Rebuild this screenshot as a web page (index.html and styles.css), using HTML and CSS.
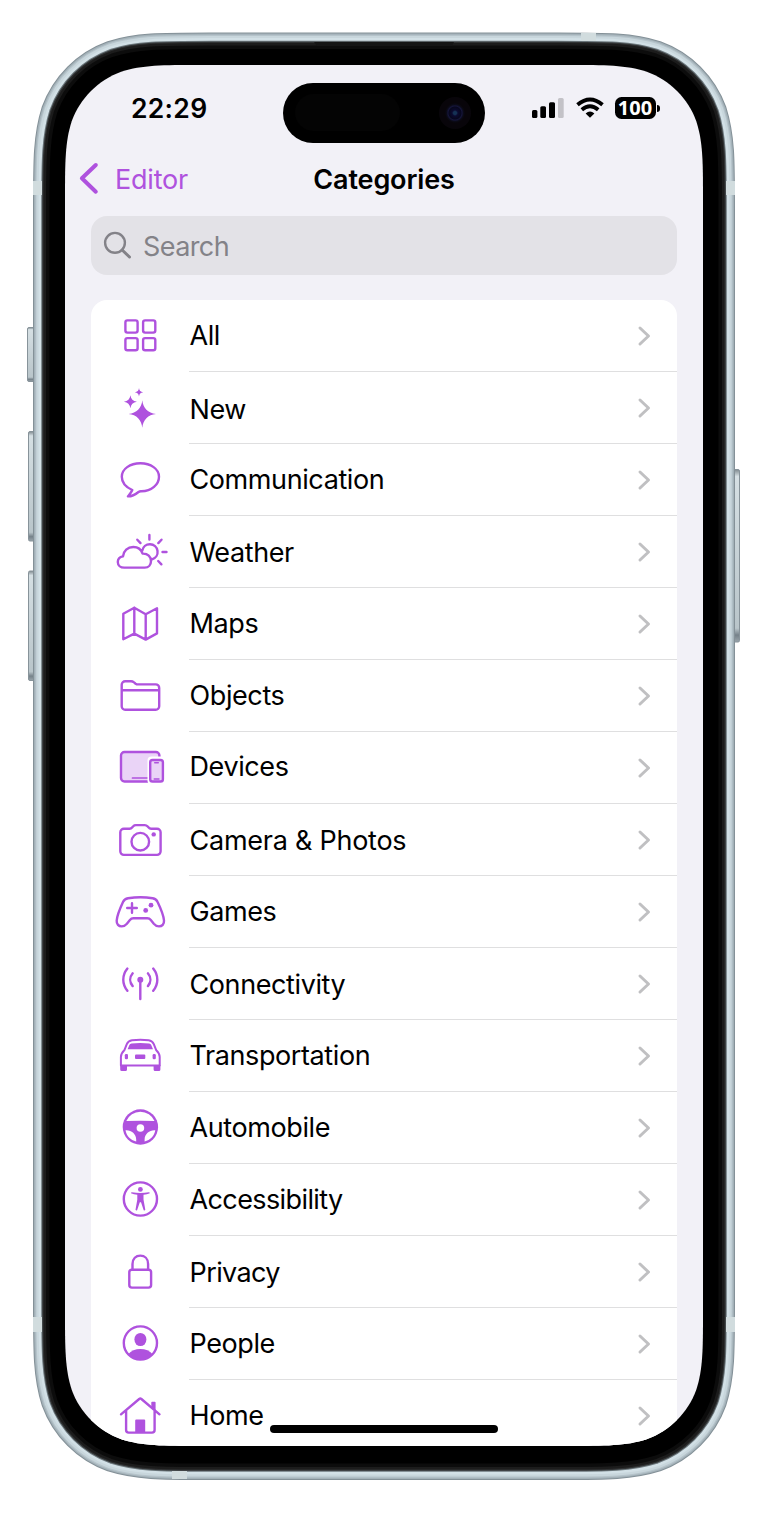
FILE: index.html
```html
<!DOCTYPE html>
<html lang="en">
<head>
<meta charset="utf-8">
<title>Categories</title>
<link rel="stylesheet" href="styles.css">
</head>
<body>
<div class="phone">
  <svg class="frame" viewBox="0 0 768 1513" aria-hidden="true">
    <defs>
      <path id="rim" d="M210.2 37H557.8c49.700 0 74.600 0 101.300 8.500c29.300 10.600 52.300 33.600 62.900 62.900c8.500 26.700 8.500 51.600 8.500 101.300V1302.800c0 49.700 0 74.600-8.500 101.300c-10.600 29.300-33.600 52.300-62.900 62.900c-26.700 8.500-51.600 8.500-101.300 8.500H210.200c-49.700 0-74.600 0-101.300-8.500c-29.300-10.600-52.300-33.600-62.900-62.900c-8.500-26.700-8.500-51.600-8.500-101.300V209.700c0-49.700 0-74.600 8.500-101.300c10.600-29.300 33.600-52.300 62.900-62.900c26.700-8.500 51.600-8.500 101.300-8.500z"/>
      <clipPath id="inside"><use href="#rim"/></clipPath>
      <linearGradient id="key" x1="0" x2="0" y1="0" y2="1">
        <stop offset="0" stop-color="#7f898e"/><stop offset=".04" stop-color="#d5dfe3"/>
        <stop offset=".92" stop-color="#b9c5ca"/><stop offset=".96" stop-color="#76828a"/><stop offset="1" stop-color="#9aa5ab"/>
      </linearGradient>
    </defs>
    <g fill="url(#key)" stroke="#87939a">
      <rect x="27.5" y="327.5" width="9" height="54" rx="1.5"/>
      <rect x="28.5" y="431.5" width="9" height="109.500" rx="1.5"/>
      <rect x="28.5" y="571" width="9" height="109.500" rx="1.5"/>
      <rect x="730.500" y="469.500" width="9" height="172.500" rx="1.5"/>
    </g>
    <g fill="none">
      <use href="#rim" stroke="#849198" stroke-width="9"/>
      <use href="#rim" stroke="#a3b1b8" stroke-width="7"/>
      <use href="#rim" stroke="#b5c3ca" stroke-width="4.500"/>
      <g clip-path="url(#inside)">
        <use href="#rim" fill="#000" stroke="#0c0c0c" stroke-width="24"/>
        <use href="#rim" stroke="#1c1c1c" stroke-width="17"/>
        <use href="#rim" stroke="#303233" stroke-width="12"/>
        <use href="#rim" stroke="#6b767b" stroke-width="9.500"/>
        <use href="#rim" stroke="#d2e0e6" stroke-width="7.500"/>
      </g>
      <use href="#rim" stroke="#c8d6dc" stroke-width="2.200"/>
    </g>
    <path d="M314 42H454l-2 4H317z" fill="#151515"/>
    <g fill="#d1dcde">
      <rect x="33" y="181" width="9" height="14"/><rect x="726" y="181" width="9" height="14"/>
      <rect x="33" y="1317" width="9" height="15"/><rect x="726" y="1317" width="9" height="15"/>
      <rect x="581" y="33" width="15" height="8"/><rect x="172" y="1471" width="15" height="8"/>
    </g>
  </svg>

  <main class="screen">
    <div class="status">
      <span class="time">22:29</span>
      <div class="island"><span class="sensor"></span><span class="lens"></span></div>
      <div class="indicators">
        <svg width="32" height="22" viewBox="0 0 32 22"><rect x="0" y="13" width="5.400" height="8" rx="1.500"/><rect x="8.300" y="9.300" width="5.700" height="11.700" rx="1.500"/><rect x="17" y="5.300" width="6" height="15.700" rx="1.500"/><rect x="26" y="1" width="5.700" height="20" rx="1.500" fill="#c3c2c7"/></svg>
        <svg class="wifi" width="28" height="22" viewBox="0 0 28 22" fill="none" stroke="#000" stroke-width="3.900"><path d="M1.500 7.800Q14-2.600 26.500 7.800"/><path d="M5.800 12.700Q14 6 22.200 12.700"/><path d="M9.600 16.400Q14 12.600 18.400 16.400L14 20.700Z" fill="#000" stroke="none"/></svg>
        <span class="battery">100</span><span class="nub"></span>
      </div>
    </div>

    <header class="nav">
      <a class="back"><svg width="22" height="34" viewBox="0 0 22 34"><path d="M16.800 3L2.900 16.300L16.800 29.700"/></svg><span>Editor</span></a>
      <h1>Categories</h1>
    </header>

    <div class="search"><svg width="30" height="30" viewBox="0 0 30 30"><circle cx="12" cy="11.800" r="9.900"/><path d="M19.200 19L26.500 26" stroke-width="3"/></svg><span>Search</span></div>

    <ul class="list">
      <li class="row"><svg class="icon" viewBox="0 0 72 72"><rect x="21.400" y="20.400" width="12.200" height="12.200" rx="2"/><rect x="39.100" y="20.400" width="12.200" height="12.200" rx="2"/><rect x="21.400" y="38.100" width="12.200" height="12.200" rx="2"/><rect x="39.100" y="38.100" width="12.200" height="12.200" rx="2"/></svg><div class="cell"><span>All</span><svg class="chev" viewBox="0 0 14 22"><path d="M3 3L11.500 11L3 19"/></svg></div></li>
      <li class="row low"><svg class="icon solid" viewBox="0 0 72 72"><path d="M38.300 28.300C39 36 44 41.300 52 42C44 42.700 39 48 38.300 55.700C37.600 48 32.600 42.700 24.600 42C32.600 41.300 37.600 36 38.300 28.300ZM26.400 23.200C26.900 27 29 29.200 32.900 29.700C29 30.200 26.900 32.400 26.400 36.200C25.900 32.400 23.800 30.200 19.900 29.700C23.800 29.200 25.900 27 26.400 23.200ZM35 16C35.300 18.600 36.600 20 39.200 20.300C36.600 20.600 35.300 22 35 24.600C34.700 22 33.400 20.600 30.800 20.300C33.400 20 34.700 18.600 35 16Z"/></svg><div class="cell"><span>New</span><svg class="chev" viewBox="0 0 14 22"><path d="M3 3L11.500 11L3 19"/></svg></div></li>
      <li class="row"><svg class="icon" viewBox="0 0 72 72"><path d="M28.300 46C20.500 42.500 17.800 38 17.800 32.700C17.800 25 26 19.300 36.400 19.300S55 25 55 32.700S47.500 47.300 37.500 47.300Q36 47 34.500 48C31.500 50.500 28 52.500 23.900 52.400C25.500 50.500 27.300 48.500 28.300 46Z"/></svg><div class="cell"><span>Communication</span><svg class="chev" viewBox="0 0 14 22"><path d="M3 3L11.500 11L3 19"/></svg></div></li>
      <li class="row lowish"><svg class="icon" viewBox="0 0 72 72"><path d="M20.300 51.600H40.700C44.600 51.600 47 48.600 47 44.900C47 40.800 43.800 37.300 38.600 37.600C37.300 33.800 33.800 31 29.300 31C23.600 31 19.500 35 19 40.400C15.800 41 13.800 43.200 13.800 45.900C13.800 49.200 16.400 51.600 20.300 51.600ZM38.300 34.600A7.700 7.700 0 1 1 48.100 43.300M45.400 19V23.500M33.300 23.700L36.500 27.100M57.500 23.700L54.300 27.100M58.500 36H62.500M54.200 45L57.400 48.300"/></svg><div class="cell"><span>Weather</span><svg class="chev" viewBox="0 0 14 22"><path d="M3 3L11.500 11L3 19"/></svg></div></li>
      <li class="row"><svg class="icon" viewBox="0 0 72 72"><path d="M19.300 25.700L30.300 19.800L41.700 26.200L53 20.300V45.400L41.700 51.600L30.300 45.600L19.300 51.200ZM30.300 19.800V45.600M41.700 26.200V51.600"/></svg><div class="cell"><span>Maps</span><svg class="chev" viewBox="0 0 14 22"><path d="M3 3L11.500 11L3 19"/></svg></div></li>
      <li class="row"><svg class="icon" viewBox="0 0 72 72"><path d="M17.700 24.700a3.500 3.500 0 0 1 3.500-3.500H27c1.200 0 2 .4 3 1.200l1.600 1.300c.8.500 1.400.700 2.400.700H51.700a3.500 3.500 0 0 1 3.500 3.500V46.300a3.500 3.500 0 0 1-3.500 3.500H21.200a3.500 3.500 0 0 1-3.500-3.500ZM17.700 30.300H55.200"/></svg><div class="cell"><span>Objects</span><svg class="chev" viewBox="0 0 14 22"><path d="M3 3L11.500 11L3 19"/></svg></div></li>
      <li class="row high"><svg class="icon" viewBox="0 0 72 72"><rect x="17" y="20" width="38.400" height="29.500" rx="3.500" fill="#ead4f7"/><path d="M28.500 46H44" stroke-width="1.700"/><rect x="43.500" y="24.500" width="18" height="28" rx="4" fill="#fff" stroke="none"/><rect x="46.200" y="28" width="12.700" height="21.500" rx="2.300" fill="#ead4f7"/><path d="M50.700 30.700H54.300M50.200 47H55" stroke-width="1.400"/></svg><div class="cell"><span>Devices</span><svg class="chev" viewBox="0 0 14 22"><path d="M3 3L11.500 11L3 19"/></svg></div></li>
      <li class="row lowish"><svg class="icon" viewBox="0 0 72 72"><path d="M16.300 28.300a3.600 3.600 0 0 1 3.600-3.600H25.500c1.400 0 2-.4 2.800-1.400l1-1.100c.7-.8 1.400-1.100 2.600-1.100H40.800c1.200 0 1.900.3 2.600 1.100l1 1.100c.8 1 1.400 1.400 2.800 1.400H53a3.600 3.600 0 0 1 3.600 3.600V47.300a3.600 3.600 0 0 1-3.600 3.600H19.900a3.600 3.600 0 0 1-3.600-3.600Z"/><circle cx="36.300" cy="37.700" r="8.800"/><circle class="fill" cx="49.700" cy="30.400" r="2.200"/></svg><div class="cell"><span class="wide">Camera &amp; Photos</span><svg class="chev" viewBox="0 0 14 22"><path d="M3 3L11.500 11L3 19"/></svg></div></li>
      <li class="row"><svg class="icon" viewBox="0 0 72 72"><path d="M24 22.200C32 20.900 41 20.900 48.700 22.200C51.300 22.700 52.600 23.600 53.600 26C56.500 32 59.500 38.500 60 44.500C60.300 48.300 58 50.400 55 50.400C52.700 50.400 51.200 49.300 49.800 47.700L46.800 44C45.800 42.800 44.800 42.300 43.300 42.300H29.400C27.900 42.300 26.900 42.800 25.900 44L22.900 47.700C21.500 49.300 20 50.400 17.700 50.400C14.700 50.400 12.400 48.300 12.700 44.500C13.200 38.500 16.200 32 19 26C20.100 23.600 21.400 22.700 24 22.200ZM28 27.200V36.800M23.200 32H32.800"/><circle class="fill" cx="47" cy="29.200" r="2.400"/><circle class="fill" cx="41.700" cy="34.400" r="2.400"/></svg><div class="cell"><span>Games</span><svg class="chev" viewBox="0 0 14 22"><path d="M3 3L11.500 11L3 19"/></svg></div></li>
      <li class="row lowish"><svg class="icon" viewBox="0 0 72 72"><circle class="fill" cx="36.300" cy="31.700" r="3"/><path d="M36.300 32V51M23.400 20.600C17.900 27.400 17.900 35.900 23.400 42.700M49.200 20.600C54.700 27.400 54.700 35.900 49.200 42.700M28.700 25.300C25.400 29.200 25.400 34.200 28.700 38.100M43.900 25.300C47.200 29.200 47.200 34.200 43.900 38.100"/></svg><div class="cell"><span>Connectivity</span><svg class="chev" viewBox="0 0 14 22"><path d="M3 3L11.500 11L3 19"/></svg></div></li>
      <li class="row"><svg class="icon" viewBox="0 0 72 72"><path d="M28 20.300C33 19.700 39.600 19.700 44.600 20.300C47.500 20.700 48.800 21.800 49.800 24.200L52.300 30.300C54.600 32.500 55.700 34 55.700 37V45.500H16.900V37C16.900 34 18 32.500 20.300 30.300L22.800 24.200C23.800 21.800 25.100 20.700 28 20.300Z" stroke-width="2"/><path class="fill" d="M23.600 29.200L25.500 24.800Q26 23.500 27.500 23.400Q36.300 22.800 45.100 23.400Q46.600 23.500 47.100 24.800L49 29.200ZM16.200 45H23V49.500Q23 51 21.500 51H17.700Q16.200 51 16.200 49.500ZM49.600 45H56.400V49.500Q56.400 51 54.900 51H51.100Q49.600 51 49.600 49.500Z"/><g class="fill"><rect x="20.800" y="34" width="3.200" height="5.300" rx="1.300"/><rect x="48.600" y="34" width="3.200" height="5.300" rx="1.300"/><rect x="31" y="34.500" width="10.300" height="4.400" rx="1"/></g></svg><div class="cell"><span>Transportation</span><svg class="chev" viewBox="0 0 14 22"><path d="M3 3L11.500 11L3 19"/></svg></div></li>
      <li class="row"><svg class="icon" viewBox="0 0 72 72"><circle class="fill" cx="36.400" cy="35" r="17.700"/><g fill="#fff" stroke="none"><path d="M22.300 29A15.300 15.300 0 0 1 50.500 29Q36.400 28.700 22.300 29Z"/><circle cx="36.400" cy="36" r="3.800"/><path d="M21.500 38.300C26.700 37.700 32.200 41.500 32.200 47.500V49.500C26.500 48.200 22.500 44 21.500 38.300ZM51.300 38.300C46.100 37.700 40.600 41.500 40.600 47.500V49.500C46.300 48.200 50.300 44 51.300 38.300Z"/></g></svg><div class="cell"><span>Automobile</span><svg class="chev" viewBox="0 0 14 22"><path d="M3 3L11.500 11L3 19"/></svg></div></li>
      <li class="row"><svg class="icon" viewBox="0 0 72 72"><circle cx="36.400" cy="35" r="16.600"/><circle class="fill" cx="36.400" cy="25.400" r="2.400"/><path class="fill" d="M27.900 28.200Q36.400 29.800 44.900 28.200Q45.900 28.200 45.800 29.200Q43 30.400 39.500 30.800V35.500L41.300 45.800Q40.600 47 39.700 46.200L37 38.200H35.800L33.100 46.200Q32.200 47 31.500 45.800L33.300 35.500V30.800Q29.800 30.400 27 29.200Q26.900 28.200 27.900 28.200Z"/></svg><div class="cell"><span class="tight">Accessibility</span><svg class="chev" viewBox="0 0 14 22"><path d="M3 3L11.500 11L3 19"/></svg></div></li>
      <li class="row lowish"><svg class="icon" viewBox="0 0 72 72"><rect x="25.300" y="33.700" width="21.800" height="17.900" rx="2.600"/><path d="M28.500 33.500V28C28.500 22.500 32 19.600 36.300 19.600S44.100 22.500 44.100 28V33.500"/></svg><div class="cell"><span class="tight">Privacy</span><svg class="chev" viewBox="0 0 14 22"><path d="M3 3L11.500 11L3 19"/></svg></div></li>
      <li class="row"><svg class="icon" viewBox="0 0 72 72"><circle cx="36.400" cy="35" r="16.600"/><ellipse class="fill" cx="36.400" cy="31.500" rx="6" ry="6.600"/><path class="fill" d="M24 46.500C27 42.800 31.500 41 36.400 41S45.800 42.800 48.800 46.500A16.600 16.600 0 0 1 24 46.500Z"/></svg><div class="cell"><span>People</span><svg class="chev" viewBox="0 0 14 22"><path d="M3 3L11.500 11L3 19"/></svg></div></li>
      <li class="row"><svg class="icon" viewBox="0 0 72 72"><path d="M17 34.300L35.200 19Q36.300 18.200 37.400 19L55.500 34.300M22.100 30.500V50Q22.100 52.600 24.700 52.600H48Q50.600 52.600 50.600 50V30.500"/><path class="fill" d="M31.200 53V40.500Q31.200 39.500 32.200 39.500H40.200Q41.200 39.500 41.200 40.500V53ZM47.300 27V22.500Q47.300 21.700 48.100 21.700H50.800Q51.600 21.700 51.600 22.500V31Z"/></svg><div class="cell"><span>Home</span><svg class="chev" viewBox="0 0 14 22"><path d="M3 3L11.500 11L3 19"/></svg></div></li>
    </ul>
    <div class="home-bar"></div>
  </main>
</div>
</body>
</html>
```

FILE: styles.css
```css
* { box-sizing: border-box; }
body { margin: 0; background: #fff; font-family: Inter, "Liberation Sans", sans-serif; color: #000; }
.phone { position: relative; width: 768px; height: 1513px; padding: 65px; overflow: hidden; }
.frame { position: absolute; left: 0; top: 0; width: 768px; height: 1513px; }
.screen {
  position: relative; width: 638px; height: 1381px; background: #f2f1f7; overflow: hidden;
  clip-path: path("M136 0H502c39.100 0 58.700 0 79.800 6.700c23 8.400 41.200 26.500 49.500 49.500c6.700 21.100 6.700 40.700 6.700 79.800V1245c0 39.100 0 58.700-6.700 79.800c-8.400 23-26.500 41.200-49.500 49.500c-21.100 6.700-40.700 6.700-79.800 6.700H136c-39.100 0-58.700 0-79.800-6.700c-23-8.400-41.200-26.500-49.500-49.500c-6.700-21.100-6.700-40.700-6.700-79.800V136c0-39.100 0-58.700 6.700-79.800c8.400-23 26.500-41.200 49.500-49.500c21.100-6.700 40.700-6.700 79.800-6.700z");
}
.status { display: grid; grid-template-columns: 217.500px 202.500px 1fr; height: 78px; padding-top: 18px; }
.time { padding-left: 66px; font-size: 26.500px; font-weight: 600; line-height: 51px; letter-spacing: .3px; }
.island { display: flex; align-items: center; justify-content: space-between; width: 202.500px; height: 59.500px; padding: 0 14px 0 12px; border-radius: 30px; background: #000; }
.sensor { width: 105px; height: 37px; border-radius: 19px; background: #040404; }
.lens { width: 32px; height: 32px; border-radius: 50%; background: radial-gradient(circle at 50% 50%, #153255 0 1.500px, #0b0a30 3px, #07071d 6px, #15153a 7px, #0a0a16 8.500px, #08050a 10px); }
.indicators { display: flex; align-items: flex-start; padding: 14px 0 0 46.500px; }
.wifi { margin-left: 12px; }
.battery { width: 41px; height: 22px; margin-left: 11px; border-radius: 6.500px; background: #000; color: #fff; font: 700 20px/22px "Noto Sans", sans-serif; text-align: center; }
.nub { width: 2.500px; height: 7px; margin: 8px 0 0 1.500px; border-radius: 0 3px 3px 0; background: #000; }
.nav { display: grid; grid-template-columns: 1fr auto 1fr; align-items: center; height: 73px; padding: 0 14px 1px; }
.back { display: flex; align-items: center; gap: 14px; color: #af52de; font-size: 27px; letter-spacing: -.2px; }
.back path { fill: none; stroke: #af52de; stroke-width: 4; stroke-linecap: round; stroke-linejoin: round; }
h1 { margin: 0; font-size: 27px; font-weight: 600; letter-spacing: -.150px; }
.search { display: flex; align-items: center; gap: 10px; height: 59px; margin: 0 26px; padding-left: 12px; border-radius: 16px; background: #e3e2e7; color: #838288; font-size: 27px; letter-spacing: -.600px; }
.search span { padding-top: 2px; }
.search svg { fill: none; stroke: #838288; stroke-width: 2.400; stroke-linecap: round; }
.list { margin: 25px 26px 0; padding: 0; list-style: none; border-radius: 16px 16px 0 0; background: #fff; overflow: hidden; }
.row { display: flex; height: 72px; padding-left: 13px; }
.icon { flex: none; width: 72px; height: 72px; fill: none; stroke: #af52de; stroke-width: 2.400; stroke-linecap: round; stroke-linejoin: round; }
.solid, .icon .fill { fill: #af52de; stroke: none; }
.cell { display: flex; flex: 1; justify-content: space-between; margin-left: 13px; padding-right: 26px; border-bottom: 1px solid #dfdfe0; }
.cell span { padding: 19px 0 0 .500px; font-size: 27px; line-height: 33px; letter-spacing: -.400px; white-space: nowrap; }
.cell .tight { letter-spacing: -.600px; }
.cell .wide { letter-spacing: -.250px; }
.low .cell span { padding-top: 21px; }
.lowish .cell span { padding-top: 20px; }
.high .cell span { padding-top: 18px; }
.chev { flex: none; width: 14px; height: 22px; margin-top: 24.700px; fill: none; stroke: #c0c0c2; stroke-width: 3; stroke-linecap: round; stroke-linejoin: round; }
.home-bar { position: absolute; left: 205px; top: 1360px; width: 228px; height: 8px; border-radius: 4px; background: #000; }
```
